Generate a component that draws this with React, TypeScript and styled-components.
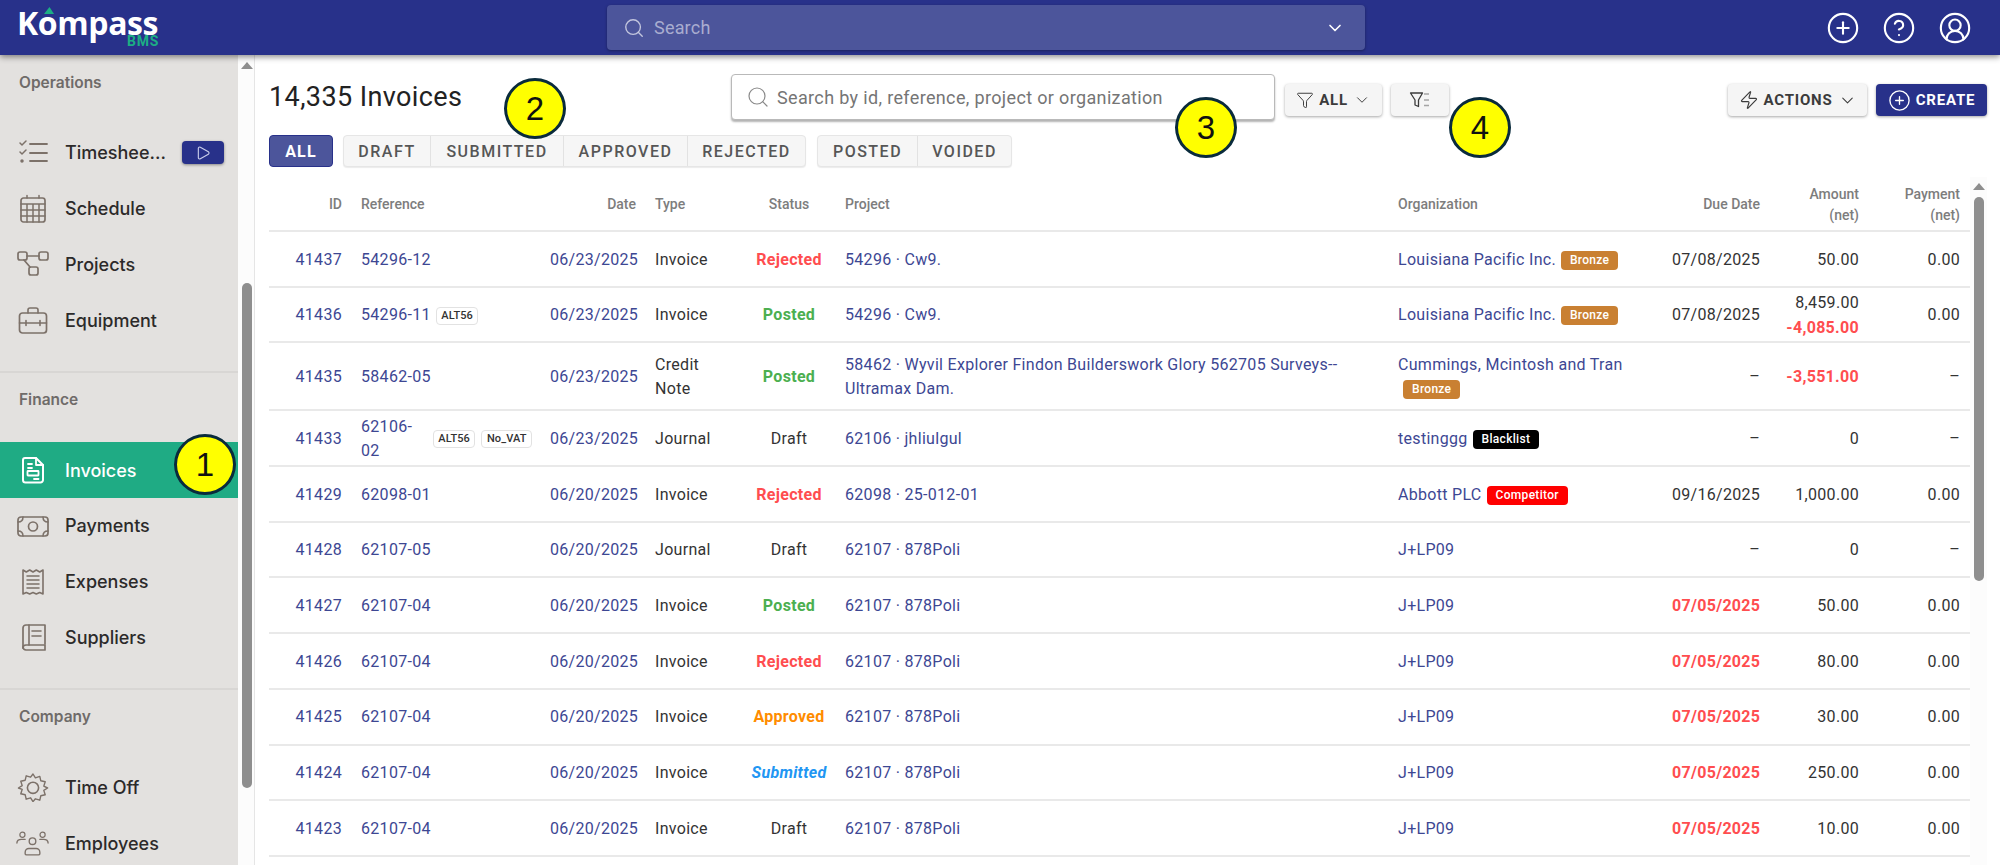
import React, { FC, ReactNode } from 'react';
import styled, { createGlobalStyle } from 'styled-components';
import {
  ChevronDown,
  CircleHelp,
  CirclePlus,
  CircleUserRound,
  Funnel,
  Play,
  Search,
  Zap,
} from 'lucide-react';

const GlobalStyle = createGlobalStyle`
  html, body {
    margin: 0;
    padding: 0;
    height: 100%;
    overflow: hidden;
    background: #fff;
    font-family: Roboto, "Liberation Sans", sans-serif;
  }
  * { box-sizing: border-box; }
`;

const Page = styled.div`
  position: relative;
  display: flex;
  flex-direction: column;
  width: 2000px;
  height: 865px;
  overflow: hidden;
`;

const TopBar = styled.header`
  position: relative;
  z-index: 5;
  flex: none;
  display: flex;
  align-items: center;
  height: 55px;
  background: #28318a;
  box-shadow: 0 2px 6px rgba(0, 0, 0, 0.45);
`;
const Logo = styled.div`
  position: relative;
  flex: none;
  width: 607px;
  height: 55px;
  padding: 11px 0 0 17px;
  font-family: "Open Sans", sans-serif;
  font-weight: 700;
  font-size: 32px;
  line-height: 24px;
  letter-spacing: -0.4px;
  color: #fff;
`;
const LogoSub = styled.span`
  position: absolute;
  left: 127px;
  top: 36px;
  font-family: Roboto, sans-serif;
  font-size: 14px;
  line-height: 10px;
  font-weight: 700;
  letter-spacing: 0.8px;
  color: #1cae84;
`;
const LogoPeak = styled.svg`
  position: absolute;
  left: 44px;
  top: 7px;
`;
const TopSearch = styled.div`
  flex: none;
  display: flex;
  align-items: center;
  width: 758px;
  height: 45px;
  padding: 0 20px 0 16px;
  background: #4c559b;
  border-radius: 4px;
  box-shadow: 0 1px 3px rgba(0, 0, 0, 0.35);
  color: #c3c6de;
  font-size: 18px;
  letter-spacing: 0.2px;
`;
const TopSearchText = styled.span`
  flex: 1;
  margin-left: 9px;
  color: #a9add0;
`;
const TopIcons = styled.div`
  display: flex;
  gap: 22px;
  margin-left: auto;
  padding-right: 28px;
  color: #fff;
`;

const Body = styled.div`
  flex: 1;
  display: flex;
  min-height: 0;
`;
const Sidebar = styled.nav`
  flex: none;
  width: 238px;
  background: #e3e1df;
  overflow: hidden;
  font-family: Inter, sans-serif;
`;
const SideGroup = styled.section<{ $top: number }>`
  padding: ${(p) => p.$top}px 0 23px;
  border-bottom: 2px solid #d8d6d4;
  &:last-child { border-bottom: 0; }
`;
const SideTitle = styled.h5`
  margin: 0 0 31px 19px;
  height: 22px;
  font-size: 15.5px;
  line-height: 22px;
  font-weight: 600;
  color: #6f6b69;
`;
const SideItem = styled.div<{ $active?: boolean }>`
  display: flex;
  align-items: center;
  height: 55.8px;
  padding-left: 16px;
  font-size: 18px;
  font-weight: 500;
  color: ${(p) => (p.$active ? '#fff' : '#2c2a2a')};
  background: ${(p) => (p.$active ? '#1fab84' : 'transparent')};
`;
const SideIcon = styled.span<{ $active?: boolean }>`
  flex: none;
  display: flex;
  justify-content: center;
  width: 33px;
  margin-right: 16px;
  color: ${(p) => (p.$active ? '#fff' : '#7c7169')};
`;
const SideLabel = styled.span`
  flex: 1;
`;
const PlayButton = styled.span`
  display: flex;
  align-items: center;
  justify-content: center;
  width: 42px;
  height: 23px;
  margin-right: 14px;
  border-radius: 4px;
  background: #28318a;
  color: #c9cdea;
  box-shadow: 0 1px 3px rgba(0, 0, 0, 0.4);
`;

const ScrollTrack = styled.div<{ $arrowTop: number; $thumbTop: number; $thumbHeight: number }>`
  flex: none;
  width: 17px;
  padding-left: 4px;
  background: #fcfcfc;
  &::before {
    content: '';
    display: block;
    width: 0;
    margin: ${(p) => p.$arrowTop}px 0 0 -1px;
    border-left: 6px solid transparent;
    border-right: 6px solid transparent;
    border-bottom: 7px solid #8e8e8e;
  }
  &::after {
    content: '';
    display: block;
    width: 10px;
    height: ${(p) => p.$thumbHeight}px;
    margin-top: ${(p) => p.$thumbTop - p.$arrowTop - 7}px;
    border-radius: 5px;
    background: #8e8e8e;
  }
`;
const SideScroll = styled(ScrollTrack)`
  border-right: 1px solid #e5e5e5;
`;

const Main = styled.main`
  flex: 1;
  min-width: 0;
  display: flex;
  flex-direction: column;
  padding: 0 13px 0 14px;
`;
const Toolbar = styled.div`
  flex: none;
  display: flex;
  align-items: flex-start;
  height: 80px;
  padding-top: 19px;
`;
const PageTitle = styled.h1`
  flex: none;
  width: 462px;
  margin: 7px 0 0;
  font-size: 27px;
  line-height: 32px;
  letter-spacing: 0.4px;
  font-weight: 400;
  color: #222;
`;
const SearchBox = styled.label`
  flex: none;
  display: flex;
  align-items: center;
  gap: 7px;
  width: 544px;
  height: 46px;
  padding: 0 14px;
  background: #fff;
  border: 1px solid #b9b9b9;
  border-radius: 4px;
  box-shadow: 0 2px 2px rgba(0, 0, 0, 0.3);
  color: #8a8a8a;
`;
const SearchInput = styled.input`
  flex: 1;
  min-width: 0;
  border: 0;
  outline: 0;
  padding: 0;
  background: transparent;
  font-family: Roboto, sans-serif;
  font-size: 18px;
  letter-spacing: 0.35px;
  &::placeholder { color: #757575; opacity: 1; }
`;
const ToolButton = styled.button<{ $primary?: boolean; $push?: boolean; $width: number; $left?: number }>`
  flex: none;
  display: flex;
  align-items: center;
  justify-content: center;
  gap: 5px;
  width: ${(p) => p.$width}px;
  height: 32px;
  margin: 10px 0 0 ${(p) => (p.$push ? 'auto' : `${p.$left ?? 9}px`)};
  padding: 0;
  border: 0;
  border-radius: 4px;
  background: ${(p) => (p.$primary ? '#28318a' : '#f5f5f5')};
  color: ${(p) => (p.$primary ? '#fff' : '#3b3b3b')};
  box-shadow: 0 1px 3px rgba(0, 0, 0, 0.35);
  font-family: Roboto, sans-serif;
  font-size: 15px;
  font-weight: 700;
  letter-spacing: 0.8px;
`;

const Tabs = styled.div`
  flex: none;
  display: flex;
  height: 32px;
`;
const AllTab = styled.div`
  display: flex;
  align-items: center;
  justify-content: center;
  width: 64px;
  margin-right: 10px;
  border: 1px solid #28318a;
  border-radius: 4px;
  background: #4c559b;
  color: #fff;
  font-size: 16px;
  font-weight: 700;
  letter-spacing: 1.2px;
`;
const TabGroup = styled.div`
  display: flex;
  margin-right: 11px;
  border: 1px solid #e6e6e6;
  border-radius: 4px;
  background: #f6f6f6;
  box-shadow: 0 1px 1px rgba(0, 0, 0, 0.08);
`;
const Tab = styled.div<{ $width: number }>`
  display: flex;
  align-items: center;
  justify-content: center;
  width: ${(p) => p.$width}px;
  border-left: 1px solid #e2e2e2;
  &:first-child { border-left: 0; }
  color: #565656;
  font-size: 16px;
  font-weight: 500;
  letter-spacing: 1.5px;
`;

const TableArea = styled.div`
  flex: 1;
  display: flex;
  min-height: 0;
  padding-top: 10px;
`;
const Table = styled.div`
  flex: 1;
  min-width: 0;
`;
const Row = styled.div<{ $height: number; $head?: boolean }>`
  display: grid;
  grid-template-columns: 74px 171px 87px 78px 76px 535px 256px 88px 81px 83px;
  column-gap: 18px;
  align-items: center;
  height: ${(p) => p.$height}px;
  padding: 2px 10px 0 0;
  border-bottom: 2px solid #e9e9e9;
  font-size: ${(p) => (p.$head ? 14 : 16)}px;
  line-height: ${(p) => (p.$head ? 21 : 24.5)}px;
  letter-spacing: ${(p) => (p.$head ? 0 : 0.3)}px;
  font-weight: ${(p) => (p.$head ? 500 : 400)};
  color: ${(p) => (p.$head ? '#7d7d7d' : '#333')};
`;
const Cell = styled.div<{ $align?: string; $inset?: boolean }>`
  text-align: ${(p) => p.$align || 'left'};
  padding-right: ${(p) => (p.$inset ? 1 : 0)}px;
`;
const LinkCell = styled(Cell)`
  color: #3d4793;
`;
const RefCell = styled.div`
  display: flex;
  align-items: center;
  gap: 5px;
  color: #3d4793;
`;
const RefText = styled.span`
  flex: 0 1 auto;
`;
const RefTags = styled.span`
  flex: none;
  display: flex;
  gap: 6px;
`;
const RefTag = styled.span`
  height: 18px;
  padding: 0 4.5px;
  border: 1px solid #e2e2e2;
  border-radius: 4px;
  font-size: 11px;
  line-height: 16px;
  letter-spacing: 0.1px;
  font-weight: 500;
  color: #333;
  background: #fff;
`;
const TypeText = styled.div`
  max-width: 72px;
`;
const STATUS_COLORS: Record<string, string> = {
  Rejected: '#ff4d4f',
  Posted: '#4caf50',
  Approved: '#ff8c00',
  Submitted: '#2196f3',
  Draft: '#333',
};
const Status = styled.div<{ $status: string }>`
  text-align: center;
  white-space: nowrap;
  color: ${(p) => STATUS_COLORS[p.$status]};
  font-weight: ${(p) => (p.$status === 'Draft' ? 400 : 700)};
  font-style: ${(p) => (p.$status === 'Submitted' ? 'italic' : 'normal')};
`;
const OrgBadge = styled.span<{ $color: string }>`
  display: inline-block;
  height: 19px;
  margin-left: 5px;
  padding: 0 9px;
  border-radius: 4px;
  background: ${(p) => p.$color};
  color: #fff;
  font-size: 12px;
  line-height: 19px;
  letter-spacing: 0.3px;
  font-weight: 500;
  vertical-align: 1px;
`;
const Negative = styled.div`
  color: #ff4d4f;
  font-weight: 700;
`;
const DueLate = styled.span`
  color: #ff4d4f;
  font-weight: 700;
`;

const Marker = styled.div<{ $left: number; $top: number }>`
  position: absolute;
  z-index: 10;
  left: ${(p) => p.$left}px;
  top: ${(p) => p.$top}px;
  display: flex;
  align-items: center;
  justify-content: center;
  width: 62px;
  height: 61px;
  border: 3px solid #0a2b3c;
  border-radius: 50%;
  background: #ffff00;
  color: #111;
  font-family: "Liberation Sans", sans-serif;
  font-size: 33px;
`;

const Icon: FC<{ children: ReactNode; w?: number; h?: number }> = ({ children, w = 32, h = 30 }) => (
  <svg width={w} height={h} viewBox={`0 0 ${w} ${h}`} fill="none" stroke="currentColor" strokeWidth="1.5" strokeLinecap="round" strokeLinejoin="round">
    {children}
  </svg>
);

const TimesheetIcon = () => (
  <Icon>
    <path d="M3 5l2 2 4-4M3 14l2 2 4-4" />
    <circle cx="5" cy="23" r="1" fill="currentColor" />
    <path d="M13 6h17M13 15h17M13 23h17" strokeWidth="1.8" />
  </Icon>
);
const ScheduleIcon = () => (
  <Icon>
    <rect x="4" y="4" width="24" height="24" rx="2.5" strokeWidth="1.7" />
    <path d="M4 10h24M4 16h24M4 22h24M10 10v18M16 10v18M22 10v18M10 1.5V4M22 1.5V4" />
  </Icon>
);
const ProjectsIcon = () => (
  <Icon>
    <rect x="1" y="3" width="9" height="8" rx="2" strokeWidth="1.7" />
    <rect x="22" y="3" width="9" height="8" rx="2" strokeWidth="1.7" />
    <rect x="12" y="18" width="9" height="8" rx="2" strokeWidth="1.7" />
    <path d="M10 7h12M7 11l6 7" strokeWidth="1.7" />
  </Icon>
);
const EquipmentIcon = () => (
  <Icon>
    <path d="M11 8V5a2 2 0 012-2h6a2 2 0 012 2v3" strokeWidth="1.6" />
    <rect x="2.5" y="8" width="27" height="20" rx="3" strokeWidth="1.7" />
    <path d="M2.5 18h27M9 15.5v5M23 15.5v5" strokeWidth="1.6" />
  </Icon>
);
const InvoiceIcon = () => (
  <Icon>
    <path d="M8 3h11l7 7v15a2.5 2.5 0 01-2.5 2.5h-15A2.5 2.5 0 016 25V5a2 2 0 012-2z" strokeWidth="2" />
    <path d="M19 3v7h7M11 9h4M11 13h4" strokeWidth="1.8" />
    <rect x="10.5" y="16" width="11" height="4.5" rx="0.5" strokeWidth="1.8" />
    <path d="M17 24h4.5" strokeWidth="1.8" />
  </Icon>
);
const PaymentsIcon = () => (
  <Icon>
    <rect x="1" y="6" width="30" height="19" rx="3" strokeWidth="1.7" />
    <circle cx="16" cy="15.5" r="4.5" strokeWidth="1.7" />
    <path d="M1 11c3 0 5-2 5-5M31 11c-3 0-5-2-5-5M1 20c3 0 5 2 5 5M31 20c-3 0-5 2-5 5" strokeWidth="1.5" />
  </Icon>
);
const ExpensesIcon = () => (
  <Icon>
    <path d="M6 3l3.300 2 3.400-2 3.300 2 3.300-2 3.400 2L26 3v24l-3.300-1.500-3.400 1.500-3.300-1.500-3.300 1.500-3.400-1.500L6 27z" strokeWidth="1.6" />
    <path d="M10 9h12M10 13h12M10 17h12M10 21h12" />
  </Icon>
);
const SuppliersIcon = () => (
  <Icon>
    <path d="M28 22V3H9a3 3 0 00-3 3v20" strokeWidth="1.7" />
    <path d="M6 26a3 3 0 013-3h19v5H9a3 3 0 01-3-3z" strokeWidth="1.7" />
    <path d="M12 3v20M15 9h9M15 14h9" strokeWidth="1.6" />
  </Icon>
);
const TimeOffIcon = () => (
  <Icon>
    <path d="M16 2l2.400 3.800 4.400-1.400 1 4.400 4.400 1-1.400 4.400L30.600 16l-3.800 2.400 1.400 4.400-4.400 1-1 4.400-4.400-1.400L16 29.600l-2.400-3.800-4.400 1.400-1-4.400-4.400-1 1.400-4.400L1.400 16l3.800-2.400-1.400-4.400 4.400-1 1-4.400 4.400 1.400z" strokeWidth="1.4" />
    <circle cx="16" cy="15.800" r="5.600" strokeWidth="1.6" />
  </Icon>
);
const EmployeesIcon = () => (
  <Icon w={36} h={30}>
    <circle cx="18" cy="13" r="3.600" strokeWidth="1.5" />
    <circle cx="7" cy="6" r="2.800" strokeWidth="1.3" />
    <circle cx="29" cy="6" r="2.800" strokeWidth="1.3" />
    <path d="M10 27v-2a4 4 0 014-4h8a4 4 0 014 4v2a1.500 1.500 0 01-1.500 1h-13A1.500 1.500 0 0110 27zM1 15c0-3 2-4 5-4h4M35 15c0-3-2-4-5-4h-4" strokeWidth="1.5" />
  </Icon>
);
const FilterListIcon = () => (
  <svg width="22" height="20" viewBox="0 0 22 20" fill="none" stroke="currentColor" strokeWidth="1.3" strokeLinejoin="round">
    <path d="M1.500 3h12L9.500 10v6.500L6 15v-5z" />
    <path d="M15 4h5M15 10h5M15 15.500h5" stroke="#a5a5a5" strokeWidth="1.6" />
  </svg>
);

interface Invoice {
  id: string;
  ref: string;
  tags?: string[];
  date: string;
  type: string;
  status: string;
  project: string;
  org: string;
  badge?: { label: string; color: string };
  due?: string;
  late?: boolean;
  amount: string;
  refund?: string;
  negative?: boolean;
  payment: string;
}

const BRONZE = { label: 'Bronze', color: '#c98032' };

const late = (id: string, status: string, amount: string): Invoice => ({
  id,
  ref: '62107-04',
  date: '06/20/2025',
  type: 'Invoice',
  status,
  project: '62107 · 878Poli',
  org: 'J+LP09',
  due: '07/05/2025',
  late: true,
  amount,
  payment: '0.00',
});

const invoices: Invoice[] = [
  { id: '41437', ref: '54296-12', date: '06/23/2025', type: 'Invoice', status: 'Rejected', project: '54296 · Cw9.', org: 'Louisiana Pacific Inc.', badge: BRONZE, due: '07/08/2025', amount: '50.00', payment: '0.00' },
  { id: '41436', ref: '54296-11', tags: ['ALT56'], date: '06/23/2025', type: 'Invoice', status: 'Posted', project: '54296 · Cw9.', org: 'Louisiana Pacific Inc.', badge: BRONZE, due: '07/08/2025', amount: '8,459.00', refund: '-4,085.00', payment: '0.00' },
  { id: '41435', ref: '58462-05', date: '06/23/2025', type: 'Credit Note', status: 'Posted', project: '58462 · Wyvil Explorer Findon Builderswork Glory 562705 Surveys--Ultramax Dam.', org: 'Cummings, Mcintosh and Tran', badge: BRONZE, amount: '-3,551.00', negative: true, payment: '–' },
  { id: '41433', ref: '62106-02', tags: ['ALT56', 'No_VAT'], date: '06/23/2025', type: 'Journal', status: 'Draft', project: '62106 · jhliulgul', org: 'testinggg', badge: { label: 'Blacklist', color: '#000' }, amount: '0', payment: '–' },
  { id: '41429', ref: '62098-01', date: '06/20/2025', type: 'Invoice', status: 'Rejected', project: '62098 · 25-012-01', org: 'Abbott PLC', badge: { label: 'Competitor', color: '#ff0000' }, due: '09/16/2025', amount: '1,000.00', payment: '0.00' },
  { id: '41428', ref: '62107-05', date: '06/20/2025', type: 'Journal', status: 'Draft', project: '62107 · 878Poli', org: 'J+LP09', amount: '0', payment: '–' },
  late('41427', 'Posted', '50.00'),
  late('41426', 'Rejected', '80.00'),
  late('41425', 'Approved', '30.00'),
  late('41424', 'Submitted', '250.00'),
  late('41423', 'Draft', '10.00'),
];

const App: FC = () => (
  <Page>
    <GlobalStyle />
    <TopBar>
      <Logo>
        Kompass
        <LogoPeak width="10" height="7" viewBox="0 0 10 7">
          <path d="M5.500 0L10 7H0z" fill="#1cae84" />
        </LogoPeak>
        <LogoSub>BMS</LogoSub>
      </Logo>
      <TopSearch>
        <Search size={22} strokeWidth={1.5} />
        <TopSearchText>Search</TopSearchText>
        <ChevronDown size={20} color="#fff" />
      </TopSearch>
      <TopIcons>
        <CirclePlus size={34} strokeWidth={1.5} />
        <CircleHelp size={34} strokeWidth={1.5} />
        <CircleUserRound size={34} strokeWidth={1.5} />
      </TopIcons>
    </TopBar>
    <Body>
      <Sidebar>
        <SideGroup $top={17}>
          <SideTitle>Operations</SideTitle>
          <SideItem>
            <SideIcon><TimesheetIcon /></SideIcon>
            <SideLabel>Timeshee...</SideLabel>
            <PlayButton><Play size={16} strokeWidth={1.7} /></PlayButton>
          </SideItem>
          <SideItem><SideIcon><ScheduleIcon /></SideIcon><SideLabel>Schedule</SideLabel></SideItem>
          <SideItem><SideIcon><ProjectsIcon /></SideIcon><SideLabel>Projects</SideLabel></SideItem>
          <SideItem><SideIcon><EquipmentIcon /></SideIcon><SideLabel>Equipment</SideLabel></SideItem>
        </SideGroup>
        <SideGroup $top={16}>
          <SideTitle>Finance</SideTitle>
          <SideItem $active><SideIcon $active><InvoiceIcon /></SideIcon><SideLabel>Invoices</SideLabel></SideItem>
          <SideItem><SideIcon><PaymentsIcon /></SideIcon><SideLabel>Payments</SideLabel></SideItem>
          <SideItem><SideIcon><ExpensesIcon /></SideIcon><SideLabel>Expenses</SideLabel></SideItem>
          <SideItem><SideIcon><SuppliersIcon /></SideIcon><SideLabel>Suppliers</SideLabel></SideItem>
        </SideGroup>
        <SideGroup $top={16}>
          <SideTitle>Company</SideTitle>
          <SideItem><SideIcon><TimeOffIcon /></SideIcon><SideLabel>Time Off</SideLabel></SideItem>
          <SideItem><SideIcon><EmployeesIcon /></SideIcon><SideLabel>Employees</SideLabel></SideItem>
        </SideGroup>
      </Sidebar>
      <SideScroll $arrowTop={7} $thumbTop={228} $thumbHeight={505} />
      <Main>
        <Toolbar>
          <PageTitle>14,335 Invoices</PageTitle>
          <SearchBox>
            <Search size={24} strokeWidth={1.2} />
            <SearchInput placeholder="Search by id, reference, project or organization" />
          </SearchBox>
          <ToolButton $width={97} $left={10}>
            <Funnel size={18} strokeWidth={1.3} />
            ALL
            <ChevronDown size={18} strokeWidth={1.3} />
          </ToolButton>
          <ToolButton $width={58}>
            <FilterListIcon />
          </ToolButton>
          <ToolButton $push $width={139}>
            <Zap size={20} strokeWidth={1.4} />
            ACTIONS
            <ChevronDown size={19} strokeWidth={1.3} />
          </ToolButton>
          <ToolButton $primary $width={111}>
            <CirclePlus size={23} strokeWidth={1.4} />
            CREATE
          </ToolButton>
        </Toolbar>
        <Tabs>
          <AllTab>ALL</AllTab>
          <TabGroup>
            <Tab $width={86}>DRAFT</Tab>
            <Tab $width={133}>SUBMITTED</Tab>
            <Tab $width={124}>APPROVED</Tab>
            <Tab $width={118}>REJECTED</Tab>
          </TabGroup>
          <TabGroup>
            <Tab $width={99}>POSTED</Tab>
            <Tab $width={94}>VOIDED</Tab>
          </TabGroup>
        </Tabs>
        <TableArea>
          <Table>
            <Row $head $height={55}>
              <Cell $align="right" $inset>ID</Cell>
              <Cell>Reference</Cell>
              <Cell $align="right" $inset>Date</Cell>
              <Cell>Type</Cell>
              <Cell $align="center">Status</Cell>
              <Cell>Project</Cell>
              <Cell>Organization</Cell>
              <Cell $align="right">Due Date</Cell>
              <Cell $align="right">Amount<br />(net)</Cell>
              <Cell $align="right">Payment<br />(net)</Cell>
            </Row>
            {invoices.map((inv) => (
              <Row key={inv.id} $height={inv.id === '41435' ? 68 : 55.7}>
                <LinkCell $align="right" $inset>{inv.id}</LinkCell>
                <RefCell>
                  <RefText>{inv.ref}</RefText>
                  {inv.tags && (
                    <RefTags>
                      {inv.tags.map((t) => <RefTag key={t}>{t}</RefTag>)}
                    </RefTags>
                  )}
                </RefCell>
                <LinkCell $align="right" $inset>{inv.date}</LinkCell>
                <TypeText>{inv.type}</TypeText>
                <Status $status={inv.status}>{inv.status}</Status>
                <LinkCell>{inv.project}</LinkCell>
                <LinkCell>
                  {inv.org}
                  {inv.badge && <OrgBadge $color={inv.badge.color}>{inv.badge.label}</OrgBadge>}
                </LinkCell>
                <Cell $align="right">
                  {inv.late ? <DueLate>{inv.due}</DueLate> : inv.due || '–'}
                </Cell>
                <Cell $align="right">
                  {inv.negative ? <Negative>{inv.amount}</Negative> : inv.amount}
                  {inv.refund && <Negative>{inv.refund}</Negative>}
                </Cell>
                <Cell $align="right">{inv.payment}</Cell>
              </Row>
            ))}
          </Table>
          <ScrollTrack $arrowTop={6} $thumbTop={20} $thumbHeight={384} />
        </TableArea>
      </Main>
    </Body>
    <Marker $left={174} $top={434}>1</Marker>
    <Marker $left={504} $top={78}>2</Marker>
    <Marker $left={1175} $top={97}>3</Marker>
    <Marker $left={1449} $top={97}>4</Marker>
  </Page>
);

export default App;
